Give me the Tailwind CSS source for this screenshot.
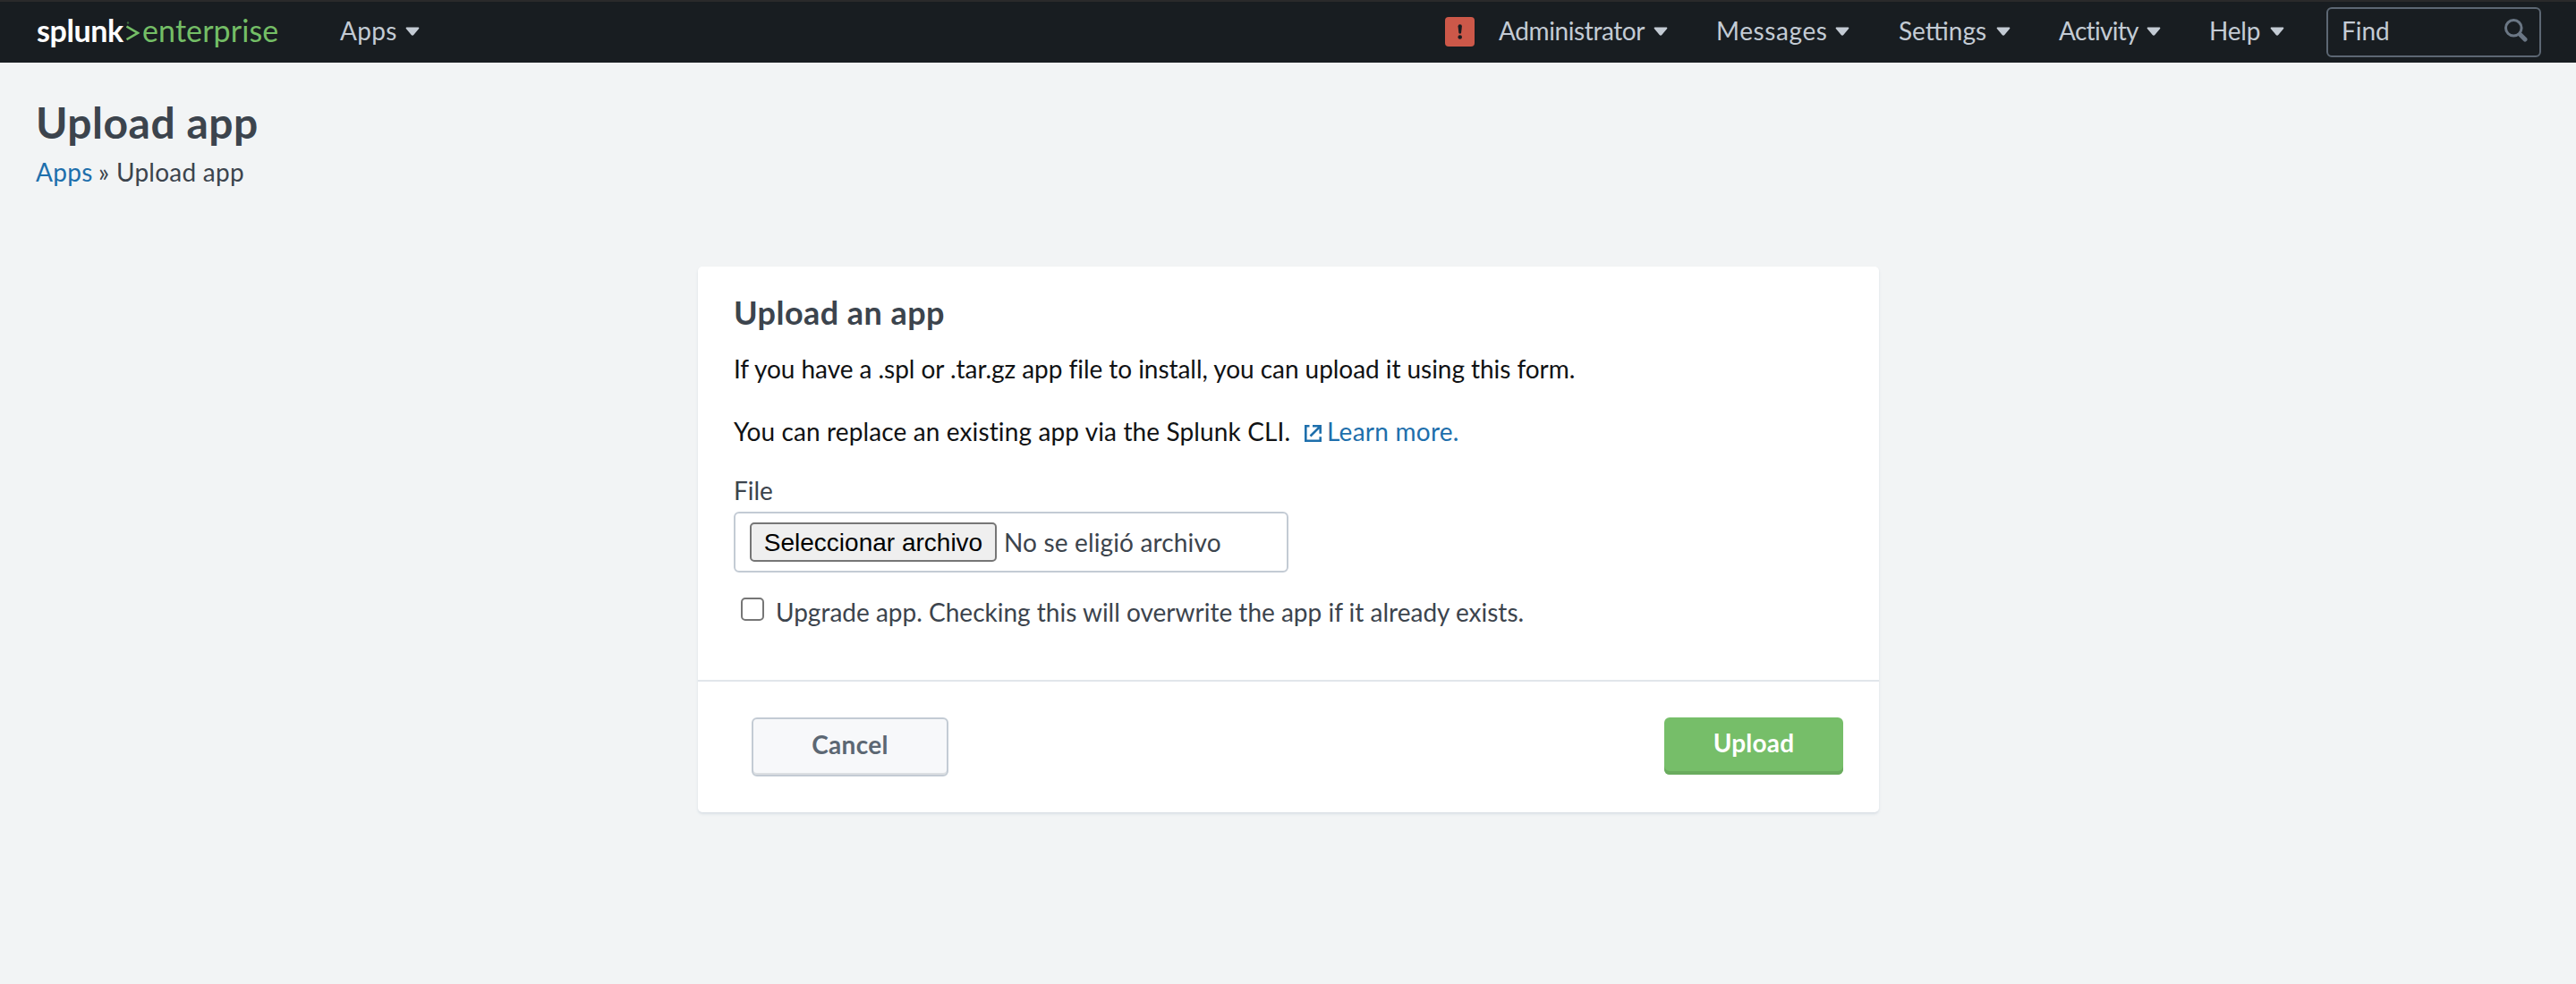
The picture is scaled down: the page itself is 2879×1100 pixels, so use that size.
<!DOCTYPE html>
<html lang="en">
<head>
<meta charset="utf-8">
<title>Upload app | Splunk</title>
<script src="https://cdn.jsdelivr.net/npm/@tailwindcss/browser@4"></script>
</head>
<body class="min-h-[1100px] bg-[#f2f4f5] font-['Lato',sans-serif] text-[28px] text-[#3c444d]">
<svg class="hidden">
  <symbol id="caret" viewBox="0 0 16 10"><path d="M1.8.5h12.4c1 0 1.5 1 .8 1.8L9.300 8.900a1.700 1.700 0 0 1-2.600 0L1 2.300C.3 1.500.8.500 1.800.500z" fill="#c3cbd4"/></symbol>
</svg>
<header class="flex h-[70px] items-start border-t-2 border-[#2a2a2b] bg-[#181d21] whitespace-nowrap text-[#c3cbd4]">
  <a class="ml-[41px] flex h-[62px] w-[339px] items-center text-[34px]">
    <span class="w-[100px] font-bold tracking-[-0.4px] text-white">splunk</span>
    <svg class="mt-[8px] mr-[3px] h-[26px] w-[15px]" viewBox="0 0 15 26" fill="none"><path d="M.5 5.500 13 12.800.5 20.200" stroke="#74be66" stroke-width="2.600"/><circle cx="2" cy="1.500" r="1.200" fill="#3f6b3d"/></svg>
    <span class="tracking-[0.1px] text-[#74be66]">enterprise</span>
  </a>
  <nav class="flex h-[64px] flex-1 items-center">
    <a class="flex items-center"><span class="w-[73px] tracking-[0.3px]">Apps</span><svg class="mt-[2px] h-[10px] w-[16px]"><use href="#caret"/></svg></a>
  </nav>
  <nav class="flex h-[64px] items-center">
    <svg class="mt-[3px] mr-[27px] h-[33px] w-[33px]" viewBox="0 0 33 33"><rect width="33" height="33" rx="4" fill="#cc5849"/><path d="M14.500 10.500a2.200 2.200 0 0 1 4.400 0l-.9 7.500q-1.300 1.600-2.600 0z" fill="#181d21"/><circle cx="16.700" cy="22.500" r="2.300" fill="#181d21"/></svg>
    <a class="flex w-[243px] items-center"><span class="w-[173px] tracking-[-0.4px]">Administrator</span><svg class="mt-[2px] h-[10px] w-[16px]"><use href="#caret"/></svg></a>
    <a class="flex w-[204px] items-center"><span class="w-[133px] tracking-[0.6px]">Messages</span><svg class="mt-[2px] h-[10px] w-[16px]"><use href="#caret"/></svg></a>
    <a class="flex w-[179px] items-center"><span class="w-[109px]">Settings</span><svg class="mt-[2px] h-[10px] w-[16px]"><use href="#caret"/></svg></a>
    <a class="flex w-[168px] items-center"><span class="w-[98px] tracking-[-0.7px]">Activity</span><svg class="mt-[2px] h-[10px] w-[16px]"><use href="#caret"/></svg></a>
    <a class="flex w-[131px] items-center"><span class="w-[68px] tracking-[-0.2px]">Help</span><svg class="mt-[2px] h-[10px] w-[16px]"><use href="#caret"/></svg></a>
  </nav>
  <div class="mt-[6px] mr-[39px] flex h-[56px] w-[240px] items-start justify-between rounded-md border-2 border-[#5c6773] pl-[15px] pr-[13px]">
    <span class="leading-[48px]">Find</span>
    <svg class="mt-[11px] h-[26px] w-[26px]" viewBox="0 0 26 26" fill="none" stroke="#6b7785"><circle cx="10.300" cy="10.300" r="8.800" stroke-width="3"/><path d="m17.500 17.500 5.500 5.500" stroke-width="5" stroke-linecap="round"/></svg>
  </div>
</header>

<main>
  <div class="px-[40px] pt-[39px]">
    <h1 class="text-[48px] leading-[56px] font-bold tracking-[0.5px]">Upload app</h1>
    <p class="mt-[9px] flex leading-[36px]"><a class="w-[70px] tracking-[0.3px] text-[#1e6fac]">Apps</a><span class="w-[20px]">»</span><span class="tracking-[0.25px]">Upload app</span></p>
  </div>

  <section class="mt-[88px] ml-[780px] w-[1320px] rounded-[5px] bg-white shadow-[0_2px_3px_#d9dfe5]">
    <div class="h-[462px] px-[40px] pt-[29px] text-[28px]">
      <h2 class="text-[36px] leading-[44px] font-bold tracking-[0.45px]">Upload an app</h2>
      <p class="mt-[23px] leading-[36px] tracking-[-0.05px] text-[#101214]">If you have a .spl or .tar.gz app file to install, you can upload it using this form.</p>
      <p class="mt-[34px] flex leading-[36px] text-[#101214]"><span class="w-[638px] tracking-[0.12px]">You can replace an existing app via the Splunk CLI.</span>
        <a class="flex text-[#1e6fac]"><svg class="mt-[11px] mr-[6px] h-[19px] w-[19px]" viewBox="0 0 19 19" fill="none" stroke="#1e6fac" stroke-width="2.600"><path d="M5.500 1.300H1.300v16.400h16.400v-4.400M9 1.300h8.700v8.500M17.200 1.800 6.500 12.500"/></svg><span class="tracking-[0.25px]">Learn more.</span></a></p>
      <label class="mt-[30px] block leading-[36px]">File</label>
      <div class="mt-[6px] flex h-[68px] w-[620px] items-center rounded-md border-2 border-[#c3cbd4] pl-[16px]">
        <button class="h-[44px] w-[276px] rounded-[5px] border-2 border-[#767676] bg-[#efefef] pt-[1px] text-center font-['Liberation_Sans',sans-serif] text-[28px] leading-[38px] whitespace-nowrap text-black">Seleccionar archivo</button>
        <span class="ml-[8px] tracking-[0.15px]">No se eligió archivo</span>
      </div>
      <label class="mt-[26px] flex leading-[36px]"><span class="mt-[2px] mr-[13px] ml-[8px] h-[26px] w-[26px] rounded-[5px] border-2 border-[#767676] bg-white"></span><span>Upgrade app. Checking this will overwrite the app if it already exists.</span></label>
    </div>
    <div class="flex h-[148px] justify-between border-t-2 border-[#e1e6eb] pt-[40px] pr-[40px] pl-[60px]">
      <button class="h-[66px] w-[220px] rounded-md border-2 border-[#c3cbd4] bg-[#f7f8fa] text-center leading-[56px] font-bold tracking-[0.3px] text-[#5c6773] shadow-[inset_0_-2px_0_#dcdfe2]"><span class="block h-[62px]">Cancel</span></button>
      <button class="h-[64px] w-[200px] rounded-md bg-[#76be69] text-center leading-[56px] font-bold tracking-[0.2px] text-white shadow-[inset_0_-4px_0_#6aab5e]"><span class="block h-[64px]">Upload</span></button>
    </div>
  </section>
</main>
</body>
</html>
